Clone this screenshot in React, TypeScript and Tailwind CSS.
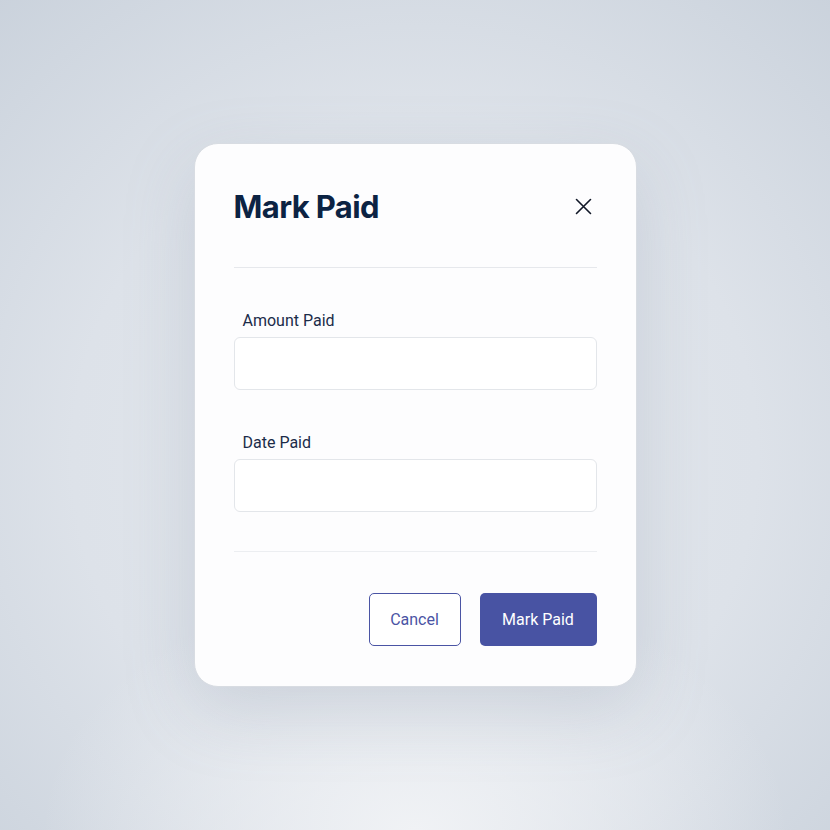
import React, { useState } from 'react';

export default function App() {
  const [amount, setAmount] = useState('');
  const [date, setDate] = useState('');

  return (
    <div className="w-[830px] h-[830px] flex items-center justify-center bg-[radial-gradient(ellipse_45%_30%_at_50%_100%,rgba(240,242,245,1)_0%,rgba(240,242,245,0)_100%),radial-gradient(ellipse_75%_75%_at_50%_55%,#e4e8ed_0%,#dde2e9_55%,#cad2dc_100%)] font-['Roboto',sans-serif]">
      <div className="w-[443px] h-[544px] rounded-[24px] border border-[#d8dce2] bg-[#fdfdfe] shadow-[0_24px_70px_rgba(120,134,156,0.22)] px-[39px] pt-[39px] pb-[39px] flex flex-col">
        <div className="flex items-center justify-between h-[46px]">
          <h2 className="font-['Inter',sans-serif] font-bold text-[31px] tracking-[-0.02em] text-[#0c2343] leading-none">Mark Paid</h2>
          <button className="w-[30px] h-[30px] flex items-center justify-center text-[#111827] -mr-[2px]">
            <svg width="17" height="17" viewBox="0 0 17 17" fill="none" stroke="currentColor" strokeWidth="1.6" strokeLinecap="round">
              <path d="M1.5 1.5L15.5 15.5M15.5 1.5L1.5 15.5" />
            </svg>
          </button>
        </div>

        <div className="mt-[38px] h-px bg-[#e6e8ec]" />

        <div className="mt-[41px] flex flex-col gap-[41px]">
          <div>
            <label className="block pl-[9px] h-6 leading-6 text-[16px] text-[#1b2c49]">Amount Paid</label>
            <input
              value={amount}
              onChange={e => setAmount(e.target.value)}
              className="mt-1 w-full h-[53px] rounded-[6px] border border-[#e3e6ea] bg-white px-3 outline-none"
            />
          </div>
          <div>
            <label className="block pl-[9px] h-6 leading-6 text-[16px] text-[#1b2c49]">Date Paid</label>
            <input
              value={date}
              onChange={e => setDate(e.target.value)}
              className="mt-1 w-full h-[53px] rounded-[6px] border border-[#e3e6ea] bg-white px-3 outline-none"
            />
          </div>
        </div>

        <div className="mt-[39px] h-px bg-[#eceef1]" />

        <div className="mt-[41px] flex justify-end gap-[19px]">
          <button className="w-[92px] h-[53px] rounded-[5px] border border-[#4a54a4] bg-white text-[16px] text-[#4a54a4]">Cancel</button>
          <button className="w-[117px] h-[53px] rounded-[5px] bg-[#4853a3] text-[16px] text-white">Mark Paid</button>
        </div>
      </div>
    </div>
  );
}
